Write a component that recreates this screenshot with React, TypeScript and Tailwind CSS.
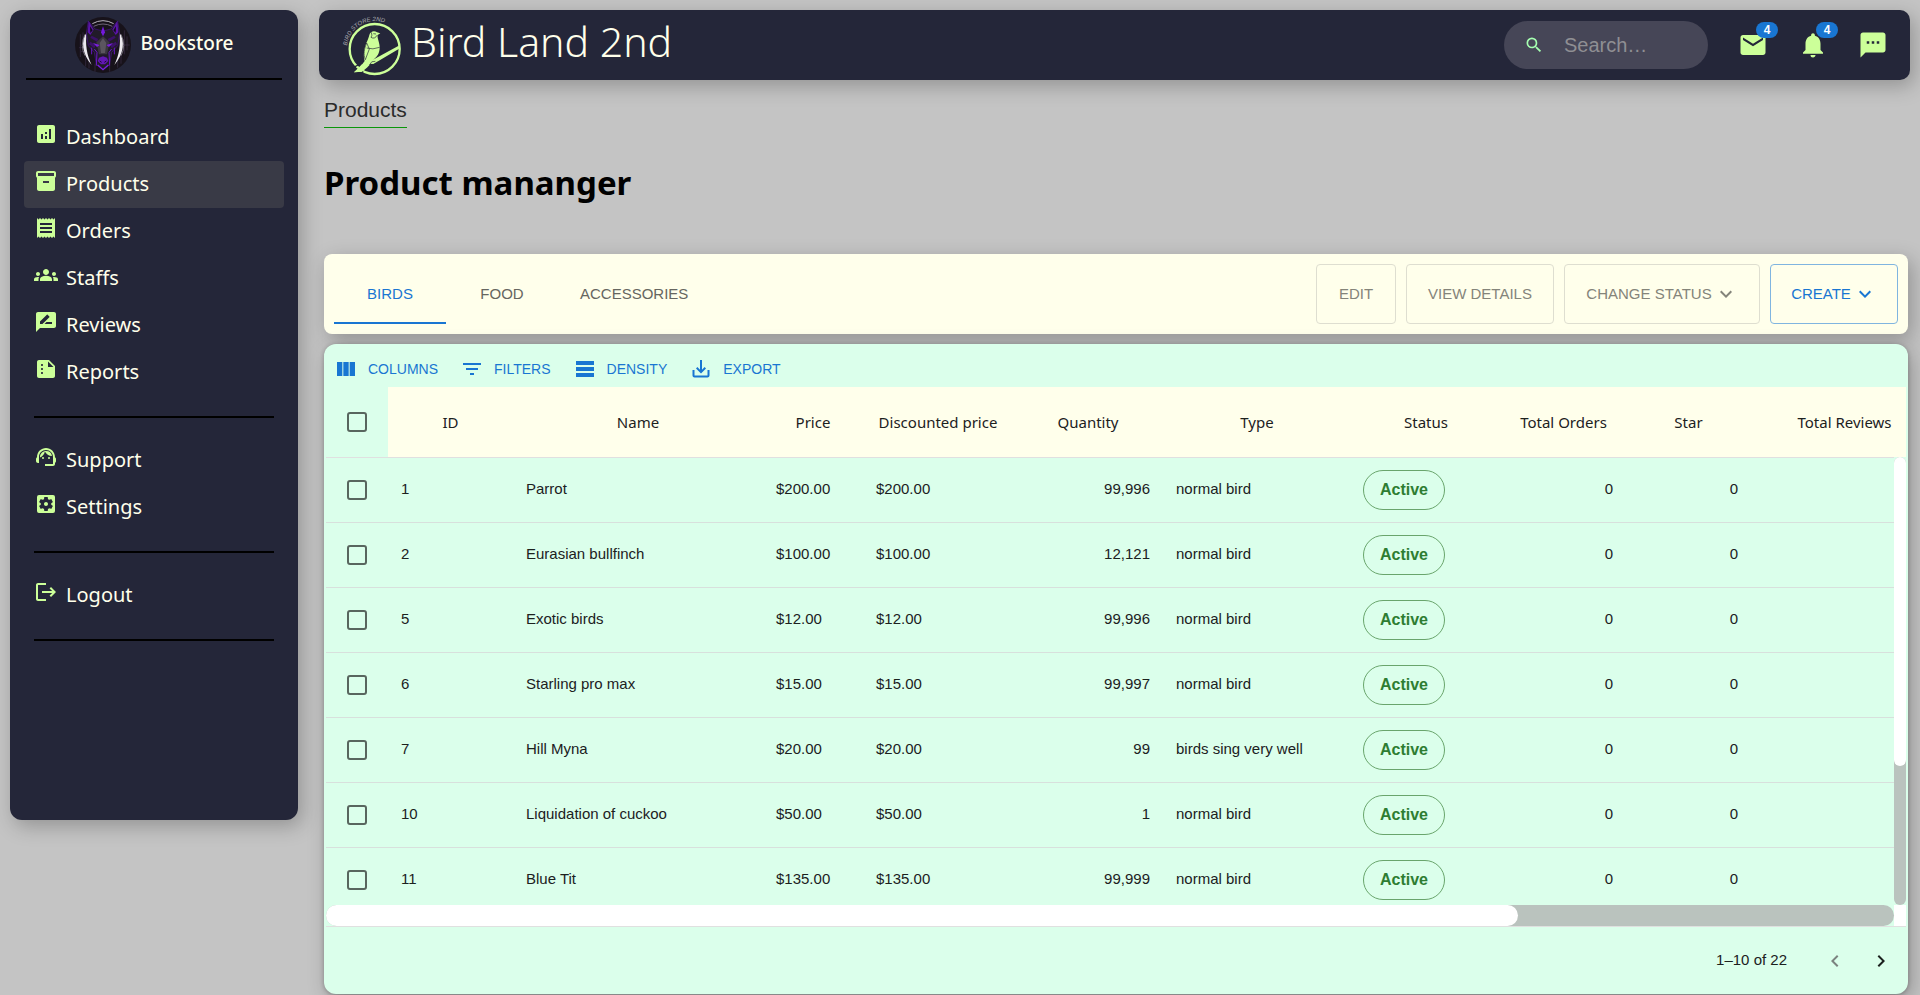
import type { ReactNode } from "react";
import type { IconType } from "react-icons";
import {
  MdAnalytics,
  MdChevronLeft,
  MdChevronRight,
  MdGroups,
  MdInventory2,
  MdKeyboardArrowDown,
  MdLogout,
  MdMail,
  MdNotifications,
  MdRateReview,
  MdReceipt,
  MdSearch,
  MdSettingsApplications,
  MdSms,
  MdSummarize,
  MdSupportAgent,
} from "react-icons/md";

type NavEntry = { label: string; icon: IconType; active?: boolean };

const navGroups: NavEntry[][] = [
  [
    { label: "Dashboard", icon: MdAnalytics },
    { label: "Products", icon: MdInventory2, active: true },
    { label: "Orders", icon: MdReceipt },
    { label: "Staffs", icon: MdGroups },
    { label: "Reviews", icon: MdRateReview },
    { label: "Reports", icon: MdSummarize },
  ],
  [
    { label: "Support", icon: MdSupportAgent },
    { label: "Settings", icon: MdSettingsApplications },
  ],
  [{ label: "Logout", icon: MdLogout }],
];

type Product = {
  id: number;
  name: string;
  price: string;
  quantity: string;
  type: string;
};

const products: Product[] = [
  { id: 1, name: "Parrot", price: "$200.00", quantity: "99,996", type: "normal bird" },
  { id: 2, name: "Eurasian bullfinch", price: "$100.00", quantity: "12,121", type: "normal bird" },
  { id: 5, name: "Exotic birds", price: "$12.00", quantity: "99,996", type: "normal bird" },
  { id: 6, name: "Starling pro max", price: "$15.00", quantity: "99,997", type: "normal bird" },
  { id: 7, name: "Hill Myna", price: "$20.00", quantity: "99", type: "birds sing very well" },
  { id: 10, name: "Liquidation of cuckoo", price: "$50.00", quantity: "1", type: "normal bird" },
  { id: 11, name: "Blue Tit", price: "$135.00", quantity: "99,999", type: "normal bird" },
];

const headings = [
  "ID",
  "Name",
  "Price",
  "Discounted price",
  "Quantity",
  "Type",
  "Status",
  "Total Orders",
  "Star",
  "Total Reviews",
];

function WolfAvatar() {
  return (
    <svg viewBox="0 0 168 168" className="size-14 shrink-0" aria-hidden="true">
      <circle cx="84" cy="84" r="84" fill="#17121a" />
      <g fill="none" stroke="#3d2f4a" strokeWidth="2">
        <path d="M16 52V120M24 46V70M32 120V148M42 124V154M128 124V152M138 112V140M148 40V112M156 58V100M60 140V164M104 146V164" />
        <path d="M12 92H34M134 84H164M18 104H30" />
      </g>
      <path d="M52 20Q84 2 116 20" fill="none" stroke="#b9b4bf" strokeWidth="3" />
      <path d="M56 28Q84 14 112 28" fill="none" stroke="#6f6678" strokeWidth="3" />
      <path d="M36 46C16 70 22 112 50 144C36 116 29 80 36 46Z" fill="#ece9ef" />
      <path d="M132 46C152 70 146 112 118 144C132 116 139 80 132 46Z" fill="#ece9ef" />
      <path d="M30 52Q14 86 30 116M138 52Q154 86 138 116" fill="none" stroke="#a9a3b0" strokeWidth="2" />
      <path
        d="M40 12L60 36L84 42L108 36L128 12L134 50L128 86L110 106L104 142L84 158L64 142L58 106L40 86L34 50Z"
        fill="#211b29"
        stroke="#45118a"
        strokeWidth="2"
      />
      <path d="M41 12L56 38L46 54L38 46ZM127 12L112 38L122 54L130 46Z" fill="#5a14a8" />
      <path d="M45 28L53 40L46 48ZM123 28L115 40L122 48Z" fill="#100c15" />
      <path d="M84 28L90 46L84 58L78 46Z" fill="#7419dc" />
      <path d="M84 58L104 76L96 112H72L64 76Z" fill="#3b3640" />
      <path d="M84 64L94 78L90 108H78L74 78Z" fill="#5b555f" />
      <path
        d="M50 56L70 66L66 74L46 62ZM118 56L98 66L102 74L122 62ZM46 74L62 84L58 94L42 82ZM122 74L106 84L110 94L126 82Z"
        fill="#3a1168"
      />
      <path d="M54 78L74 84L66 90ZM114 78L94 84L102 90Z" fill="#7b1fe0" />
      <path
        d="M58 96L66 106L64 146M110 96L102 106L104 146M50 92V112M118 92V112"
        fill="none"
        stroke="#6a18c4"
        strokeWidth="3"
      />
      <path d="M72 122L84 118L96 122L100 132L90 142H78L68 132Z" fill="#6317b4" />
      <path d="M74 132L80 136M94 132L88 136" stroke="#1b0c2d" strokeWidth="3" />
      <path d="M68 144L84 158L100 144" fill="none" stroke="#7b1fe0" strokeWidth="4" />
    </svg>
  );
}

function BirdLogo() {
  return (
    <svg viewBox="0 0 186 183" className="h-[61px] w-[62px] shrink-0 overflow-visible" aria-hidden="true">
      <defs>
        <path id="logo-arc" d="M21 92A84 84 0 0 1 164 43" />
      </defs>
      <text fill="#a9a9ae" fontFamily="Liberation Sans" fontStyle="italic" fontSize="18">
        <textPath href="#logo-arc">BIRD STORE 2ND</textPath>
      </text>
      <circle cx="104" cy="102" r="75" fill="none" stroke="#ccff99" strokeWidth="7" />
      <path d="M176 92L180 100L100 147L88 146L92 138Z" fill="#ccff99" />
      <path
        d="M88 60C91 48 104 46 111 52L121 55L113 60C111 67 116 76 118 88C121 104 117 118 108 127C97 137 91 153 66 170L42 172C54 162 66 150 74 138C70 124 71 104 79 84C83 75 86 69 88 60Z"
        fill="#ccff99"
      />
      <path d="M80 84C73 100 69 118 76 134L88 102Z" fill="#ccff99" stroke="#242639" strokeWidth="2" />
      <path
        d="M94 52Q98 62 93 67Q104 74 112 60M80 99Q98 105 119 97M88 150Q94 136 106 139M100 56L108 57"
        fill="none"
        stroke="#242639"
        strokeWidth="2"
      />
      <path d="M36 160L54 150M54 178L70 170" stroke="#242639" strokeWidth="4" />
      <path d="M42 172L66 148L76 154L66 170Z" fill="#ccff99" />
    </svg>
  );
}

function Sidebar() {
  return (
    <aside className="h-[810px] w-72 shrink-0 rounded-xl bg-[#242639] px-4 pt-[7px] font-['Noto_Sans',sans-serif] text-xl text-[#ffffeb] shadow-[4px_6px_20px_rgba(0,0,0,0.25)]">
      <div className="flex items-center justify-center gap-[10px] border-b-2 border-black pb-[5px]">
        <WolfAvatar />
        <span className="pb-1 text-[19px] font-medium">Bookstore</span>
      </div>
      <nav className="-mx-0.5 pt-[34px]">
        {navGroups.map((group, index) => (
          <div key={index}>
            <ul>
              {group.map(({ label, icon: Icon, active }) => (
                <li key={label}>
                  <a
                    href={`#${label.toLowerCase()}`}
                    className={`flex h-[47px] items-start gap-2 rounded px-[10px] pt-2 leading-[30px] ${active ? "bg-[#393a46]" : ""}`}
                  >
                    <Icon className="size-6 text-[#ccff99]" />
                    {label}
                  </a>
                </li>
              ))}
            </ul>
            <hr className="mx-[10px] mt-5 mb-[19px] border-t-2 border-black" />
          </div>
        ))}
      </nav>
    </aside>
  );
}

function BadgeButton({ label, count, children }: { label: string; count?: number; children: ReactNode }) {
  return (
    <button type="button" aria-label={label} className="relative text-[#ccff99]">
      {children}
      {count !== undefined && (
        <span className="absolute -top-2 left-[18px] flex h-4 w-[22px] items-center justify-center rounded-full bg-[#1976d2] text-xs font-bold text-white">
          {count}
        </span>
      )}
    </button>
  );
}

function Header() {
  return (
    <header className="flex h-[70px] items-center justify-between rounded-[10px] bg-[#242639] pr-[22px] pl-[21px] shadow-[4px_6px_20px_rgba(0,0,0,0.25)]">
      <div className="flex items-center gap-[9px]">
        <BirdLogo />
        <span className="pb-2 font-['Noto_Sans',sans-serif] text-[41px] leading-[48px] font-light text-[#ffffeb]">
          Bird Land 2nd
        </span>
      </div>
      <div className="flex items-center gap-[30px]">
        <label className="flex h-12 w-[204px] items-center rounded-full bg-[#464657] pl-5">
          <MdSearch className="size-5 shrink-0 text-[#a5ffb0]" />
          <input
            type="search"
            aria-label="Search"
            placeholder="Search…"
            className="ml-5 w-28 bg-transparent text-xl text-white outline-none placeholder:text-[#8f8f93]"
          />
        </label>
        <BadgeButton label="Mail" count={4}>
          <MdMail className="size-[30px]" />
        </BadgeButton>
        <BadgeButton label="Notifications" count={4}>
          <MdNotifications className="size-[30px]" />
        </BadgeButton>
        <BadgeButton label="Messages">
          <MdSms className="size-[30px]" />
        </BadgeButton>
      </div>
    </header>
  );
}

function ActionBar() {
  const disabled = "rounded border border-[#deded0] text-[#84847a]";
  return (
    <div className="flex h-20 justify-between rounded-lg bg-[#ffffeb] p-[10px] text-[15px] shadow-[4px_6px_20px_rgba(0,0,0,0.25)]">
      <div role="tablist" className="flex text-[#666660]">
        <button
          type="button"
          role="tab"
          aria-selected="true"
          className="min-w-28 border-b-2 border-[#1976d2] px-5 pt-0.5 text-[#1976d2]"
        >
          BIRDS
        </button>
        <button type="button" role="tab" aria-selected="false" className="min-w-28 px-5">
          FOOD
        </button>
        <button type="button" role="tab" aria-selected="false" className="min-w-28 px-[22px]">
          ACCESSORIES
        </button>
      </div>
      <div className="flex gap-[10px]">
        <button type="button" disabled className={`w-20 ${disabled}`}>
          EDIT
        </button>
        <button type="button" disabled className={`w-[148px] ${disabled}`}>
          VIEW DETAILS
        </button>
        <button type="button" disabled className={`flex w-[196px] items-center justify-center gap-0.5 ${disabled}`}>
          CHANGE STATUS
          <MdKeyboardArrowDown className="size-6" />
        </button>
        <button
          type="button"
          className="flex w-32 items-center justify-center gap-0.5 rounded border border-[#80b5e0] text-[#1976d2]"
        >
          CREATE
          <MdKeyboardArrowDown className="size-6" />
        </button>
      </div>
    </div>
  );
}

const toolbar = [
  { label: "COLUMNS", path: "M14.67,5v14H9.33V5H14.67z M15.67,19H21V5h-5.33V19z M8.33,19V5H3v14H8.33z" },
  { label: "FILTERS", path: "M10 18h4v-2h-4v2zM3 6v2h18V6H3zm3 7h12v-2H6v2z" },
  { label: "DENSITY", path: "M21,8H3V4h18V8z M21,10H3v4h18V10z M21,16H3v4h18V16z" },
  {
    label: "EXPORT",
    path: "M18.5 13v5.5h-13V13h-2v5.5c0 1.1.9 2 2 2h13c1.1 0 2-.9 2-2V13h-2zM17 11.5l-1.41-1.41L13 12.67V3h-2v9.67l-2.59-2.58L7 11.5l5 5 5-5z",
  },
];

function Checkbox({ label }: { label: string }) {
  return (
    <input
      type="checkbox"
      aria-label={label}
      className="mx-auto block size-5 appearance-none rounded-[3px] border-2 border-[#58665e] checked:bg-[#1976d2]"
    />
  );
}

function ProductTable() {
  return (
    <div className="relative h-[518px] overflow-hidden">
      <table className="w-full min-w-[1612px] table-fixed border-collapse text-left text-[15px] text-[#1c211e]">
        <colgroup>
          <col className="w-[62px]" />
          <col className="w-[125px]" />
          <col className="w-[250px]" />
          <col className="w-[100px]" />
          <col className="w-[150px]" />
          <col className="w-[150px]" />
          <col className="w-[188px]" />
          <col className="w-[150px]" />
          <col className="w-[125px]" />
          <col className="w-[125px]" />
          <col className="w-[187px]" />
        </colgroup>
        <thead>
          <tr className="h-[70px] border-b border-[#e0e0e0] font-['Noto_Sans',sans-serif]">
            <th>
              <Checkbox label="Select all products" />
            </th>
            {headings.map((heading) => (
              <th key={heading} className="bg-[#ffffeb] text-center font-normal">
                {heading}
              </th>
            ))}
          </tr>
        </thead>
        <tbody>
          {products.map((product) => (
            <tr key={product.id} className="h-[65px] border-b border-[#d8e0dc]">
              <td>
                <Checkbox label={`Select ${product.name}`} />
              </td>
              <td className="px-[13px]">{product.id}</td>
              <td className="px-[13px]">{product.name}</td>
              <td className="px-[13px]">{product.price}</td>
              <td className="px-[13px]">{product.price}</td>
              <td className="px-[13px] text-right">{product.quantity}</td>
              <td className="px-[13px]">{product.type}</td>
              <td className="px-3">
                <span className="flex h-10 w-[82px] items-center justify-center rounded-full border border-[#69a56c] text-base font-bold text-[#2e7d32]">
                  Active
                </span>
              </td>
              <td className="px-[13px] text-right">0</td>
              <td className="px-[13px] text-right">0</td>
              <td />
            </tr>
          ))}
        </tbody>
      </table>
      <div className="absolute top-[70px] right-0 bottom-0 w-3 bg-[#dbffeb]">
        <div className="h-full rounded-full bg-[#bac3be]">
          <div className="h-[69%] rounded-full bg-white" />
        </div>
      </div>
    </div>
  );
}

function ProductGrid() {
  return (
    <section className="rounded-xl bg-[#dbffeb] px-0.5 shadow-[4px_6px_20px_rgba(0,0,0,0.25),0_1px_4px_rgba(0,0,0,0.25)]">
      <div className="flex h-[43px] items-center gap-[22px] px-2 pt-1.5 text-sm text-[#1976d2]">
        {toolbar.map(({ label, path }) => (
          <button key={label} type="button" className="flex items-center gap-[10px]">
            <svg viewBox="0 0 24 24" className="size-6" fill="currentColor" aria-hidden="true">
              <path d={path} />
            </svg>
            {label}
          </button>
        ))}
      </div>
      <ProductTable />
      <div className="flex h-[21px] bg-white">
        <div className="mr-3 flex-1 bg-[#dbffeb]">
          <div className="h-full rounded-full bg-[#bac3be]">
            <div className="h-full w-[76%] rounded-full bg-white" />
          </div>
        </div>
      </div>
      <div className="flex h-[68px] items-center justify-end border-t border-[#e0e0e0] pr-[13px] text-[15px] text-[#1c211e]">
        <span>1–10 of 22</span>
        <button type="button" disabled aria-label="Previous page" className="ml-9 text-[#7b837f]">
          <MdChevronLeft className="size-6" />
        </button>
        <button type="button" aria-label="Next page" className="ml-[22px]">
          <MdChevronRight className="size-6" />
        </button>
      </div>
    </section>
  );
}

export default function App() {
  return (
    <div className="flex min-h-screen items-start gap-[21px] bg-[#c4c4c4] pt-[10px] pr-[10px] pl-[10px] font-['Liberation_Sans',Arial,sans-serif]">
      <Sidebar />
      <div className="min-w-0 flex-1">
        <Header />
        <main className="pt-4 pr-0.5 pb-px pl-[5px]">
          <nav aria-label="Breadcrumb" className="flex">
            <a href="#products" className="border-b border-[#0a960a] pb-1 text-[21px] leading-[27px] text-[#2b2b2b]">
              Products
            </a>
          </nav>
          <h1 className="mt-8 font-['Noto_Sans',sans-serif] text-[33px] leading-[46px] font-bold text-black">
            Product mananger
          </h1>
          <div className="mt-12 space-y-[10px]">
            <ActionBar />
            <ProductGrid />
          </div>
        </main>
      </div>
    </div>
  );
}
